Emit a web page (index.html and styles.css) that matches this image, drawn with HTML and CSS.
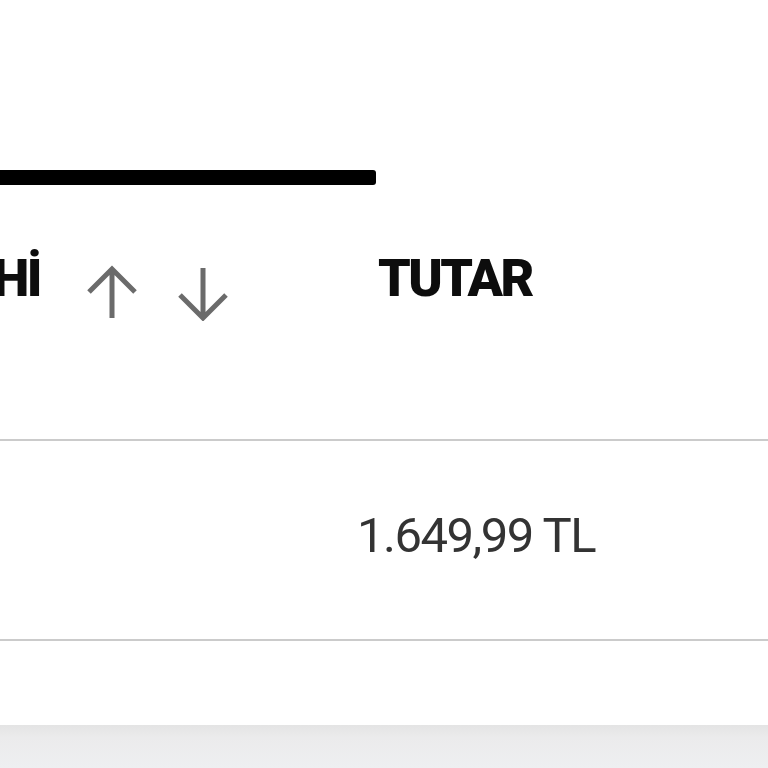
FILE: index.html
```html
<!DOCTYPE html>
<html lang="tr">
<head>
  <meta charset="UTF-8" />
  <meta name="viewport" content="width=device-width, initial-scale=1.0" />
  <title>Siparişlerim</title>
  <link rel="stylesheet" href="styles.css">
</head>
<body>
  <div class="page">
    <div class="tabs">
      <div class="tab-line"></div>
    </div>

    <div class="table">
      <div class="row head-row">
        <div class="cell date-cell">
          <span class="label">İŞLEM TARİHİ</span>
          <button class="sort-btn sort-up" type="button" aria-label="Artan">
            <svg width="54" height="56" viewBox="0 0 54 56">
              <path d="M27 3 V53 M4 27 L27 4 L50 27" />
            </svg>
          </button>
          <button class="sort-btn sort-down" type="button" aria-label="Azalan">
            <svg width="54" height="56" viewBox="0 0 54 56">
              <path d="M25 3 V53 M2 30 L25 53 L48 30" />
            </svg>
          </button>
        </div>
        <div class="cell amount-cell">
          <span class="label">TUTAR</span>
        </div>
      </div>

      <div class="row body-row">
        <div class="cell date-cell"></div>
        <div class="cell amount-cell">
          <span class="value">1.649,99 TL</span>
        </div>
      </div>
    </div>

    <div class="spacer"></div>
    <div class="footer"></div>
  </div>
</body>
</html>
```

FILE: styles.css
```css
:root {
  --text-dark: #0d0d0d;
  --text-value: #333;
  --line-color: #cbcbcb;
  --icon-color: #6b6b6b;
}

body {
  margin: 0;
  font-family: Roboto, 'Liberation Sans', sans-serif;
  background-color: #fff;
  color: var(--text-dark);
  overflow: hidden;
}

.page {
  height: 768px;
  display: flex;
  flex-direction: column;
}

.tabs {
  height: 185px;
  display: flex;
  align-items: flex-end;
}

.tab-line {
  width: 376px;
  height: 15px;
  background-color: #000;
  border-radius: 0 3px 3px 0;
}

.row {
  display: grid;
  grid-template-columns: 330px 1fr;
  border-bottom: 2px solid var(--line-color);
}

.head-row {
  height: 254px;
}

.body-row {
  height: 198px;
}

.cell {
  display: flex;
  align-items: flex-start;
}

.head-row .cell {
  padding-top: 68px;
}

.date-cell .label {
  width: 40px;
  display: flex;
  justify-content: flex-end;
  white-space: nowrap;
  margin-right: 45px;
}

.label {
  font-size: 52px;
  line-height: 52px;
  font-weight: 900;
  letter-spacing: -2.5px;
}

.amount-cell {
  padding-left: 48px;
}

.sort-btn {
  border: none;
  background: none;
  padding: 0;
  margin-top: 12px;
  cursor: pointer;
  display: block;
}

.sort-btn svg {
  display: block;
  fill: none;
  stroke: var(--icon-color);
  stroke-width: 5;
}

.sort-up {
  margin-right: 39px;
}

.body-row .amount-cell {
  padding-left: 27px;
  padding-top: 70px;
}

.value {
  font-size: 49px;
  line-height: 49px;
  color: var(--text-value);
  letter-spacing: -1.5px;
}

.spacer {
  height: 84px;
}

.footer {
  flex: 1;
  background: linear-gradient(#e4e4e4, #ebebec 30%, #eeeff1);
}
```
